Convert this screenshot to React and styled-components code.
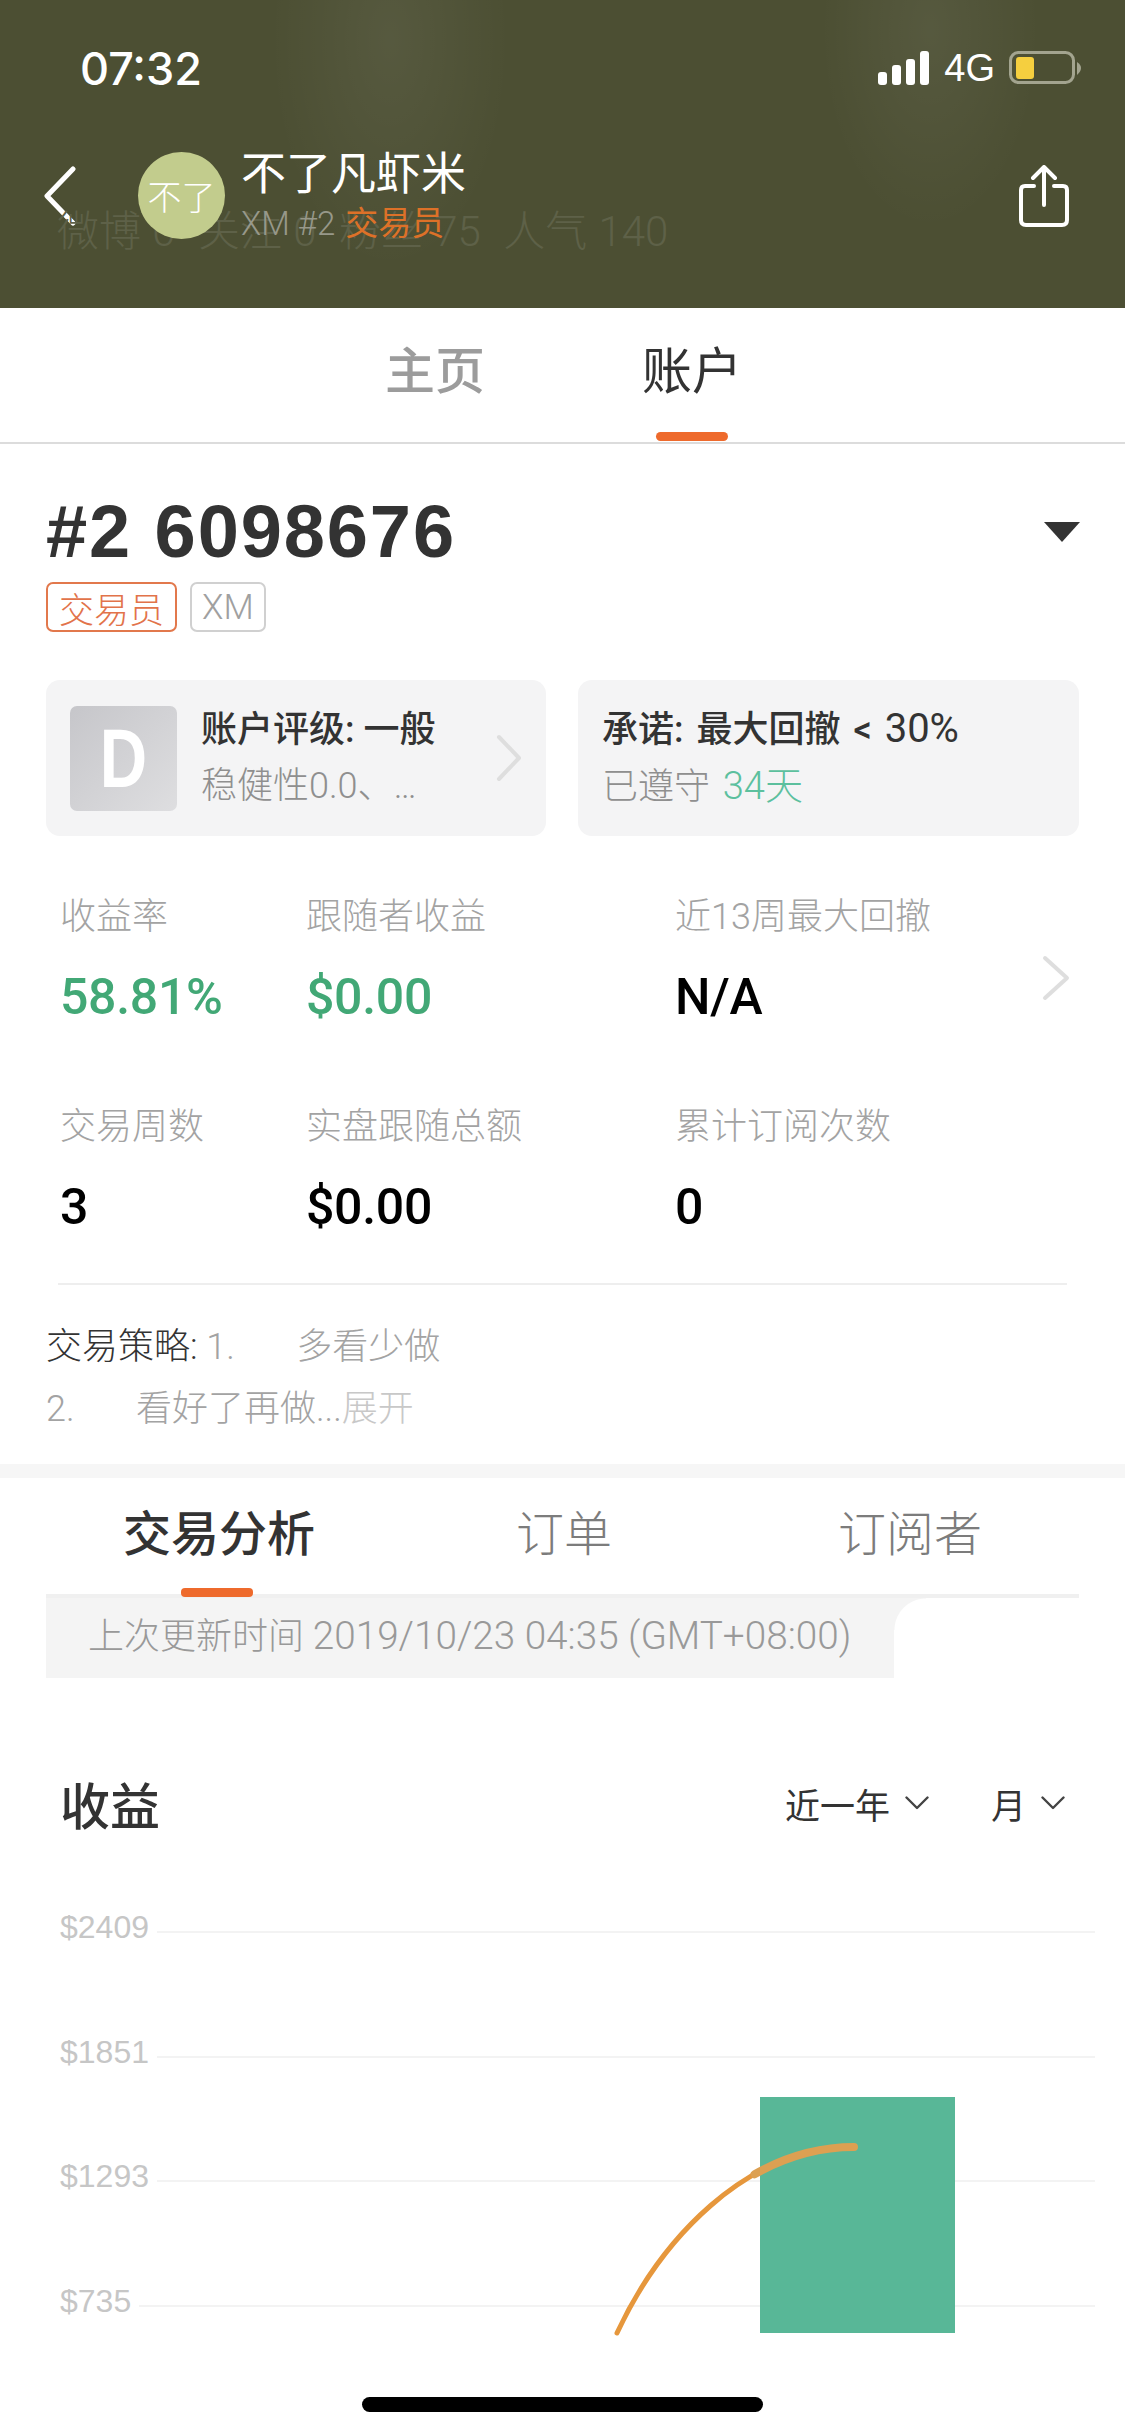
import React from "react";
import styled, { createGlobalStyle } from "styled-components";

const GlobalStyle = createGlobalStyle`
  html, body {
    margin: 0;
    padding: 0;
    background: #fff;
  }
  * {
    box-sizing: border-box;
  }
`;

const Page = styled.div`
  position: relative;
  width: 1125px;
  height: 2436px;
  overflow: hidden;
  background: #fff;
  font-family: "Roboto", "Noto Sans CJK SC", sans-serif;
  color: #333;
`;

const Header = styled.header`
  position: relative;
  height: 308px;
  padding-top: 44px;
  background:
    radial-gradient(ellipse 120px 230px at 390px 40px, rgba(255, 255, 255, 0.06), transparent),
    radial-gradient(ellipse 110px 200px at 930px 30px, rgba(255, 255, 255, 0.06), transparent),
    #4c4f33;
`;

const StatusBar = styled.div`
  display: flex;
  align-items: center;
  justify-content: space-between;
  height: 48px;
  padding: 0 43px 0 80px;
  color: #fff;
`;

const Time = styled.span`
  font-family: "Inter", sans-serif;
  font-size: 45px;
  font-weight: 500;
`;

const StatusIcons = styled.div`
  display: flex;
  align-items: center;
  gap: 14px;
`;

const Network = styled.span`
  font-family: "Liberation Sans", sans-serif;
  font-size: 38px;
  line-height: 48px;
`;

const NavBar = styled.div`
  display: flex;
  align-items: center;
  height: 87px;
  margin-top: 60px;
  padding: 0 56px 0 43px;
`;

const BackButton = styled.svg`
  width: 34px;
  height: 60px;
  margin-right: 61px;
`;

const Avatar = styled.div`
  display: flex;
  align-items: center;
  justify-content: center;
  width: 87px;
  height: 87px;
  border-radius: 50%;
  background: #c2cc8d;
  color: #fff;
  font-size: 34px;
  font-weight: 300;
  position: relative;
  z-index: 1;
`;

const Identity = styled.div`
  position: relative;
  z-index: 1;
  flex: 1;
  margin-left: 16px;
`;

const Name = styled.div`
  color: #fff;
  font-size: 45px;
  line-height: 52px;
  font-weight: 400;
`;

const SubLine = styled.div`
  display: flex;
  align-items: center;
  gap: 10px;
  margin-top: 4px;
  color: #97988a;
  font-size: 33px;
  line-height: 38px;
  font-weight: 300;
`;

const Role = styled.span`
  color: #dd7128;
  font-size: 33px;
  font-weight: 400;
`;

const GhostStats = styled.div`
  position: absolute;
  left: 57px;
  top: 208px;
  color: #5e6148;
  font-size: 42px;
  line-height: 48px;
  font-weight: 300;
  word-spacing: 1px;
  white-space: pre;
`;

const TabBar = styled.nav`
  display: flex;
  justify-content: center;
  gap: 159px;
  height: 136px;
  padding-top: 33px;
  border-bottom: 2px solid #dcdcdc;
`;

const Tab = styled.div`
  position: relative;
  width: 98px;
  height: 101px;
  font-size: 50px;
  line-height: 62px;
  font-weight: ${(p) => (p.$active ? 400 : 500)};
  color: ${(p) => (p.$active ? "#333" : "#9c9c9c")};
  white-space: nowrap;
`;

const TabMark = styled.span`
  position: absolute;
  display: ${(p) => (p.$show ? "block" : "none")};
  left: 14px;
  bottom: 1px;
  width: 72px;
  height: 9px;
  border-radius: 5px;
  background: #ee6a2c;
`;

const Account = styled.section`
  position: relative;
  padding: 49px 46px 0;
  height: 1020px;
`;

const AccountTitle = styled.h1`
  margin: 0;
  height: 78px;
  font-family: "Liberation Sans", sans-serif;
  font-size: 74px;
  line-height: 78px;
  font-weight: 700;
  letter-spacing: 1.9px;
  color: #333;
`;

const Dropdown = styled.span`
  position: absolute;
  right: 45px;
  top: 78px;
  width: 0;
  height: 0;
  border-left: 18px solid transparent;
  border-right: 18px solid transparent;
  border-top: 20px solid #333;
`;

const Tags = styled.div`
  display: flex;
  gap: 13px;
  margin-top: 11px;
`;

const Tag = styled.span`
  display: flex;
  align-items: center;
  justify-content: center;
  height: 50px;
  padding: 0 ${(p) => (p.$accent ? 11 : 10)}px;
  border: 2px solid ${(p) => (p.$accent ? "#e2784c" : "#d0d0d0")};
  border-radius: 7px;
  color: ${(p) => (p.$accent ? "#e2734a" : "#a0a0a0")};
  font-size: 35px;
  font-weight: 300;
`;

const Cards = styled.div`
  display: grid;
  grid-template-columns: 500px 501px;
  gap: 32px;
  margin-top: 48px;
`;

const Card = styled.div`
  display: flex;
  align-items: center;
  height: 156px;
  padding: 0 24px;
  border-radius: 14px;
  background: #f4f4f5;
`;

const GradeTile = styled.div`
  display: flex;
  align-items: center;
  justify-content: center;
  flex: none;
  width: 107px;
  height: 105px;
  border-radius: 7px;
  background: linear-gradient(135deg, #c6c6ca, #dedee0);
  color: #fff;
  font-family: "Liberation Sans", sans-serif;
  font-size: 84px;
  font-weight: 700;
`;

const GradeLetter = styled.span`
  display: inline-block;
  transform: scaleX(0.78);
`;

const CardText = styled.div`
  flex: 1;
  margin-left: ${(p) => (p.$tile ? 24 : 0)}px;
`;

const CardTitle = styled.div`
  font-size: 36px;
  line-height: 46px;
  font-weight: 500;
  color: #333;
  word-spacing: ${(p) => p.$spread || 0}px;
  white-space: nowrap;
`;

const Limit = styled.span`
  font-size: 40px;
  font-weight: 400;
`;

const CardSub = styled.div`
  margin-top: 10px;
  font-size: 36px;
  line-height: 46px;
  font-weight: 300;
  color: #8f8f8f;
  word-spacing: ${(p) => p.$spread || 0}px;
  white-space: nowrap;
`;

const Good = styled.span`
  color: #5cc09e;
  font-size: 38px;
`;

const Chevron = styled.svg`
  flex: none;
  width: ${(p) => p.$w}px;
  height: ${(p) => p.$h}px;
`;

const StatsGrid = styled.div`
  position: relative;
  display: grid;
  grid-template-columns: 246px 369px 1fr;
  grid-auto-rows: 120px;
  row-gap: 90px;
  margin: 58px 0 0 14px;
`;

const Stat = styled.div`
  display: flex;
  flex-direction: column;
`;

const StatLabel = styled.span`
  font-size: 36px;
  line-height: 46px;
  font-weight: 300;
  color: #a3a3a3;
`;

const StatValue = styled.span`
  margin-top: 27px;
  font-size: 50px;
  line-height: 60px;
  font-weight: 500;
  letter-spacing: -0.3px;
  color: ${(p) => (p.$green ? "#42a876" : "#000")};
`;

const StatsArrow = styled.div`
  position: absolute;
  right: 9px;
  top: 61px;
`;

const Divider = styled.hr`
  margin: 59px 12px 0 12px;
  border: 0;
  border-top: 2px solid #eeeeee;
`;

const Strategy = styled.div`
  margin-top: 31px;
  font-size: 36px;
  line-height: 62px;
  font-weight: 300;
  color: #a3a3a3;
  white-space: pre;
`;

const StrategyLabel = styled.span`
  color: #333;
`;

const Expand = styled.span`
  color: #c8c8c8;
`;

const SectionGap = styled.div`
  height: 14px;
  background: #f6f6f6;
`;

const SubTabs = styled.nav`
  display: flex;
  height: 116px;
  padding: 24px 46px 0;
  font-size: 48px;
  line-height: 66px;
  font-weight: 300;
`;

const SubTab = styled.div`
  position: relative;
  width: ${(p) => p.$w}px;
  margin-left: ${(p) => p.$ml}px;
  color: ${(p) => (p.$active ? "#333" : "#7c7c7c")};
  font-weight: ${(p) => (p.$active ? 500 : 300)};
  white-space: nowrap;
`;

const SubTabMark = styled.span`
  position: absolute;
  left: 58px;
  top: 86px;
  width: 72px;
  height: 9px;
  border-radius: 4px;
  background: #ee6a2c;
  z-index: 1;
`;

const UpdateRow = styled.div`
  position: relative;
  margin: 0 46px;
  border-top: 4px solid #f0f0f0;
`;

const UpdateNote = styled.div`
  position: relative;
  width: 848px;
  height: 80px;
  padding-left: 42px;
  background: #f4f4f4;
  color: #999;
  font-size: 36px;
  line-height: 76px;
  font-weight: 300;
  white-space: nowrap;

  &::after {
    content: "";
    position: absolute;
    top: 0;
    left: 100%;
    width: 32px;
    height: 32px;
    background: radial-gradient(circle at 100% 100%, transparent 31px, #f4f4f4 32px);
  }
`;

const UpdateStamp = styled.span`
  font-size: 38.7px;
`;

const ChartHead = styled.div`
  display: flex;
  align-items: center;
  height: 70px;
  margin-top: 90px;
  padding: 0 60px 0 60px;
`;

const ChartTitle = styled.h2`
  flex: 1;
  margin: 0;
  font-size: 50px;
  font-weight: 500;
  color: #333;
`;

const Selector = styled.div`
  display: flex;
  align-items: center;
  gap: 15px;
  margin-left: ${(p) => p.$ml || 0}px;
  font-size: 35px;
  font-weight: 400;
  color: #333;
`;

const Chart = styled.div`
  position: relative;
  height: 550px;
  margin-top: 47px;
  padding: 0 30px 0 60px;
  overflow: hidden;
`;

const GridRow = styled.div`
  display: flex;
  align-items: center;
  gap: 8px;
  height: 125.7px;
  margin-top: -1px;
  transform: translateY(-16px);
`;

const AxisLabel = styled.span`
  font-family: "Liberation Sans", sans-serif;
  font-size: 32px;
  color: #c6c6c6;
  line-height: 40px;
  margin-top: -8px;
`;

const GridLine = styled.span`
  flex: 1;
  height: 2px;
  margin-top: 2px;
  background: #f3f3f3;
`;

const Plot = styled.svg`
  position: absolute;
  left: 0;
  top: 0;
  width: 1125px;
  height: 550px;
`;

const HomeIndicator = styled.div`
  position: absolute;
  left: 362px;
  top: 2397px;
  width: 401px;
  height: 15px;
  border-radius: 8px;
  background: #000;
`;

const axisTicks = ["$2409", "$1851", "$1293", "$735"];

const stats = [
  { label: "收益率", value: "58.81%", green: true },
  { label: "跟随者收益", value: "$0.00", green: true },
  { label: "近13周最大回撤", value: "N/A" },
  { label: "交易周数", value: "3" },
  { label: "实盘跟随总额", value: "$0.00" },
  { label: "累计订阅次数", value: "0" },
];

function RightArrow({ w, h, stroke = 4 }) {
  return (
    <Chevron $w={w} $h={h} viewBox={`0 0 ${w} ${h}`} fill="none">
      <path
        d={`M3 3 L${w - 3} ${h / 2} L3 ${h - 3}`}
        stroke="#dedede"
        strokeWidth={stroke}
        strokeLinecap="round"
        strokeLinejoin="round"
      />
    </Chevron>
  );
}

function DownCaret() {
  return (
    <svg width="24" height="14" viewBox="0 0 24 14" fill="none">
      <path d="M1.5 1.5 L12 12 L22.5 1.5" stroke="#444" strokeWidth="2.4" strokeLinecap="round" strokeLinejoin="round" />
    </svg>
  );
}

function SignalBars() {
  return (
    <svg width="52" height="34" viewBox="0 0 52 34" fill="#fff">
      <rect x="0" y="21" width="9" height="13" rx="3" />
      <rect x="14" y="14" width="9" height="20" rx="3" />
      <rect x="28" y="8" width="9" height="26" rx="3" />
      <rect x="42" y="0" width="9" height="34" rx="3" />
    </svg>
  );
}

function Battery() {
  return (
    <svg width="73" height="34" viewBox="0 0 73 34" fill="none">
      <rect x="1.5" y="1.5" width="63" height="30" rx="8" stroke="#a3a48f" strokeWidth="3" />
      <rect x="7" y="6" width="18" height="22" rx="3" fill="#f5cf3f" />
      <path d="M68 11 C71 13 72 15 72 17 C72 19 71 21 68 24 Z" fill="#a3a48f" />
    </svg>
  );
}

function App() {
  return (
    <Page>
      <GlobalStyle />
      <Header>
        <GhostStats>微博 0  关注 0  粉丝 75  人气 140</GhostStats>
        <StatusBar>
          <Time>07:32</Time>
          <StatusIcons>
            <SignalBars />
            <Network>4G</Network>
            <Battery />
          </StatusIcons>
        </StatusBar>
        <NavBar>
          <BackButton viewBox="0 0 34 60" fill="none">
            <path d="M30 3 L4 30 L30 57" stroke="#fff" strokeWidth="5" strokeLinecap="round" strokeLinejoin="round" />
          </BackButton>
          <Avatar>不了</Avatar>
          <Identity>
            <Name>不了凡虾米</Name>
            <SubLine>
              XM #2 <Role>交易员</Role>
            </SubLine>
          </Identity>
          <svg width="50" height="62" viewBox="0 0 50 62" fill="none" stroke="#fff" strokeWidth="4" strokeLinecap="round" strokeLinejoin="round">
            <path d="M15 21 H6 Q2 21 2 25 V55 Q2 60 7 60 H43 Q48 60 48 55 V25 Q48 21 44 21 H35" />
            <path d="M25 40 V3 M14 13 L25 2 L36 13" />
          </svg>
        </NavBar>
      </Header>

      <TabBar>
        <Tab>主页<TabMark /></Tab>
        <Tab $active>账户<TabMark $show /></Tab>
      </TabBar>

      <Account>
        <AccountTitle>#2 6098676</AccountTitle>
        <Dropdown />
        <Tags>
          <Tag $accent>交易员</Tag>
          <Tag>XM</Tag>
        </Tags>
        <Cards>
          <Card>
            <GradeTile><GradeLetter>D</GradeLetter></GradeTile>
            <CardText $tile>
              <CardTitle>账户评级: 一般</CardTitle>
              <CardSub>稳健性0.0、…</CardSub>
            </CardText>
            <RightArrow w={26} h={48} />
          </Card>
          <Card>
            <CardText>
              <CardTitle $spread={4}>承诺: 最大回撤 &lt; <Limit>30%</Limit></CardTitle>
              <CardSub $spread={4}>已遵守 <Good>34天</Good></CardSub>
            </CardText>
          </Card>
        </Cards>
        <StatsGrid>
          {stats.map((s) => (
            <Stat key={s.label}>
              <StatLabel>{s.label}</StatLabel>
              <StatValue $green={s.green}>{s.value}</StatValue>
            </Stat>
          ))}
          <StatsArrow>
            <RightArrow w={28} h={46} />
          </StatsArrow>
        </StatsGrid>
        <Divider />
        <Strategy>
          <StrategyLabel>交易策略:</StrategyLabel> 1.{"       "}多看少做
          {"\n"}2.{"       "}看好了再做...<Expand>展开</Expand>
        </Strategy>
      </Account>

      <SectionGap />

      <SubTabs>
        <SubTab $active $w={393} $ml={77}>交易分析<SubTabMark /></SubTab>
        <SubTab $w={322}>订单</SubTab>
        <SubTab $w={160}>订阅者</SubTab>
      </SubTabs>

      <UpdateRow>
        <UpdateNote>上次更新时间 <UpdateStamp>2019/10/23 04:35 (GMT+08:00)</UpdateStamp></UpdateNote>
      </UpdateRow>

      <ChartHead>
        <ChartTitle>收益</ChartTitle>
        <Selector>近一年 <DownCaret /></Selector>
        <Selector $ml={62}>月 <DownCaret /></Selector>
      </ChartHead>

      <Chart>
        {axisTicks.map((t) => (
          <GridRow key={t}>
            <AxisLabel>{t}</AxisLabel>
            <GridLine />
          </GridRow>
        ))}
        <Plot viewBox="0 0 1125 550" fill="none">
          <rect x="760" y="212" width="195" height="236" fill="#58b797" />
          <path d="M617 448 C660 356 745 262 854 262" stroke="#e6973c" strokeWidth="5" strokeLinecap="round" />
          <path d="M754.6 289.2 C784.7 272.2 818 262 854 262" stroke="#dca052" strokeWidth="8" strokeLinecap="round" />
        </Plot>
      </Chart>

      <HomeIndicator />
    </Page>
  );
}

export default App;
